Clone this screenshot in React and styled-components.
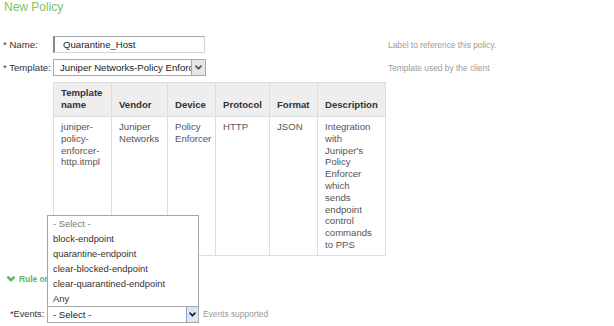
import React from 'react';
import styled, { createGlobalStyle } from 'styled-components';

const GlobalStyle = createGlobalStyle`
	body {
		margin: 0;
		background: #fff;
		font-family: "Liberation Sans", Arial, sans-serif;
		color: #333;
	}
`;

const Page = styled.div`
	width: 614px;
	height: 326px;
	overflow: hidden;
	padding-left: 3px;
	box-sizing: border-box;
`;

const Title = styled.h1`
	margin: 0;
	padding-left: 1px;
	font-size: 12px;
	line-height: 14px;
	font-weight: normal;
	color: #7cc35f;
`;

const Form = styled.div`
	margin-top: 22px;
	display: grid;
	grid-template-columns: 47px 332px auto;
	column-gap: 3px;
	row-gap: 6px;
	align-items: center;
`;

const Label = styled.label`
	font-size: 9.6px;
	white-space: nowrap;
	color: #333;
`;

const EventsLabel = styled(Label)`
	width: 33px;
	font-size: 9.2px;
	text-align: left;
`;

const Help = styled.span`
	font-size: 8.4px;
	color: #9a9a9a;
	white-space: nowrap;
`;

const TextInput = styled.div`
	width: 152px;
	height: 17px;
	box-sizing: border-box;
	border: 1px solid #d4d4d4;
	border-top-color: #a8a8a8;
	border-left: 2px solid #8a8a8a;
	padding-left: 8px;
	font-size: 9.6px;
	line-height: 15px;
	color: #222;
`;

const Select = styled.div`
	position: relative;
	width: ${(p) => p.$width}px;
	height: 17px;
	box-sizing: border-box;
	border: 1px solid #a9a9a9;
	display: flex;
	align-items: stretch;
	background: #fff;
`;

const SelectText = styled.span`
	flex: 1;
	padding-left: ${(p) => p.$pad}px;
	font-size: 9.6px;
	line-height: 15px;
	color: #222;
	white-space: nowrap;
	overflow: hidden;
`;

const ArrowBox = styled.span`
	width: ${(p) => p.$w}px;
	display: flex;
	align-items: center;
	justify-content: center;
	background: ${(p) => (p.$focus ? '#d9e7f6' : '#e6e6e6')};
	border-left: 1px solid ${(p) => (p.$focus ? '#7ea6d6' : '#a9a9a9')};
`;

const Table = styled.table`
	grid-column: 2;
	width: 332px;
	table-layout: fixed;
	border-collapse: collapse;
	font-size: 9.6px;
	line-height: 12px;

	th,
	td {
		border: 1px solid #dddddd;
		padding: 4px 7px;
		text-align: left;
	}

	th {
		background: #eeeeee;
		color: #333;
		font-weight: bold;
		vertical-align: bottom;
		padding-bottom: 5px;
		white-space: nowrap;
	}

	td {
		color: #555;
		vertical-align: top;
		line-height: 11.8px;
		padding-bottom: 4px;
	}
`;

const HeadWrap = styled.th`
	&& {
		white-space: normal;
	}
`;

const DescCell = styled.td`
	&& {
		padding-right: 10px;
	}
`;

const Section = styled.div`
	margin-top: 17px;
	padding-left: 4px;
	display: flex;
	align-items: center;
	gap: 4px;
	height: 12px;
	font-size: 8.4px;
	font-weight: bold;
	color: #5cb85c;
`;

const EventsRow = styled.div`
	margin-top: 21px;
	padding-left: 7px;
	display: flex;
	align-items: center;
	gap: 4px;
`;

const Dropdown = styled.ul`
	position: absolute;
	left: -1px;
	right: -1px;
	bottom: 100%;
	margin: 0;
	padding: 0;
	list-style: none;
	background: #fff;
	border: 1px solid #a6a6a6;
	z-index: 2;
`;

const Option = styled.li`
	height: 15px;
	line-height: 15px;
	padding-left: 5px;
	font-size: 9.4px;
	color: ${(p) => (p.$muted ? '#7a7a7a' : '#333')};
	white-space: nowrap;
`;

const Chevron = ({ color = '#444', size = 7, weight = 1.8 }) => (
	<svg width={size} height={size} viewBox="0 0 10 10">
		<polyline
			points="1.5,3 5,6.8 8.5,3"
			fill="none"
			stroke={color}
			strokeWidth={weight * 1.4}
			strokeLinecap="round"
			strokeLinejoin="round"
		/>
	</svg>
);

const columns = [58, 56, 48, 54, 48, 68];

const options = [
	'block-endpoint',
	'quarantine-endpoint',
	'clear-blocked-endpoint',
	'clear-quarantined-endpoint',
	'Any',
];

export default function App() {
	return (
		<Page>
			<GlobalStyle />
			<Title>New Policy</Title>

			<Form>
				<Label>* Name:</Label>
				<TextInput>Quarantine_Host</TextInput>
				<Help>Label to reference this policy.</Help>

				<Label>* Template:</Label>
				<Select $width={153}>
					<SelectText $pad={6}>Juniper Networks-Policy Enforcer</SelectText>
					<ArrowBox $w={13}>
						<Chevron color="#555" />
					</ArrowBox>
				</Select>
				<Help>Template used by the client</Help>

				<Table>
					<colgroup>
						{columns.map((w, i) => (
							<col key={i} style={{ width: w }} />
						))}
					</colgroup>
					<thead>
						<tr>
							<HeadWrap>Template name</HeadWrap>
							<th>Vendor</th>
							<th>Device</th>
							<th>Protocol</th>
							<th>Format</th>
							<th>Description</th>
						</tr>
					</thead>
					<tbody>
						<tr>
							<td>juniper-policy-enforcer-http.itmpl</td>
							<td>Juniper Networks</td>
							<td>Policy Enforcer</td>
							<td>HTTP</td>
							<td>JSON</td>
							<DescCell>
								Integration with Juniper's Policy Enforcer which sends endpoint
								control commands to PPS
							</DescCell>
						</tr>
					</tbody>
				</Table>
			</Form>

			<Section>
				<Chevron color="#5cb85c" size={8} weight={2.2} />
				<span>Rule on Events</span>
			</Section>

			<EventsRow>
				<EventsLabel>*Events:</EventsLabel>
				<Select $width={152}>
					<SelectText $pad={5}>- Select -</SelectText>
					<ArrowBox $w={11} $focus>
						<Chevron color="#222" />
					</ArrowBox>
					<Dropdown>
						<Option $muted>- Select -</Option>
						{options.map((o) => (
							<Option key={o}>{o}</Option>
						))}
					</Dropdown>
				</Select>
				<Help>Events supported</Help>
			</EventsRow>
		</Page>
	);
}
